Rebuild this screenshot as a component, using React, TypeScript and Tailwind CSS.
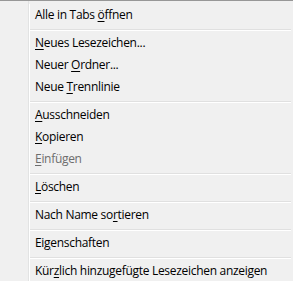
type Item =
  | { sep: true }
  | { sep?: false; pre: string; key: string; post: string; disabled?: boolean };

const items: Item[] = [
  { pre: "Alle in Tabs ", key: "ö", post: "ffnen" },
  { sep: true },
  { pre: "", key: "N", post: "eues Lesezeichen..." },
  { pre: "Neuer ", key: "O", post: "rdner..." },
  { pre: "Neue ", key: "T", post: "rennlinie" },
  { sep: true },
  { pre: "", key: "A", post: "usschneiden" },
  { pre: "", key: "K", post: "opieren" },
  { pre: "", key: "E", post: "infügen", disabled: true },
  { sep: true },
  { pre: "", key: "L", post: "öschen" },
  { sep: true },
  { pre: "Nach Name so", key: "r", post: "tieren" },
  { sep: true },
  { pre: "Ei", key: "g", post: "enschaften" },
  { sep: true },
  { pre: "Kür", key: "z", post: "lich hinzugefügte Lesezeichen anzeigen" },
];

export default function App() {
  return (
    <div
      className="w-[293px] h-[281px] overflow-hidden bg-[#f0f0f0] border-t border-[#979797] flex text-[12px] tracking-[-0.3px] text-black"
      style={{ fontFamily: '"Open Sans", "Noto Sans", sans-serif' }}
    >
      <div className="w-[28px] shrink-0" />
      <div className="flex-1 border-l border-[#e2e3e3] pt-[3px]">
        <div className="border-l border-white h-full">
          {items.map((it, i) =>
            it.sep ? (
              <div key={i} className="h-[6px] pt-[3px] mr-[2px]">
                <div className="border-t border-[#e0e0e0]" />
                <div className="border-t border-white" />
              </div>
            ) : (
              <div
                key={i}
                className={`h-[22px] leading-[22px] pl-[5px] whitespace-nowrap ${
                  it.disabled ? "text-[#6d6d6d]" : ""
                }`}
              >
                {it.pre}
                <span className="underline underline-offset-2">{it.key}</span>
                {it.post}
              </div>
            )
          )}
        </div>
      </div>
    </div>
  );
}
